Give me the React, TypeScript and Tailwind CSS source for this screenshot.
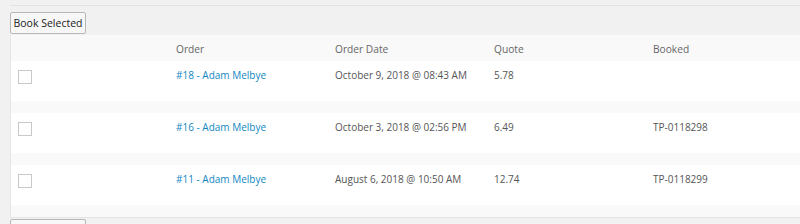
import React from "react";

const ROWS = [
  { id: 18, name: "Adam Melbye", date: "October 9, 2018 @ 08:43 AM", quote: "5.78", booked: "" },
  { id: 16, name: "Adam Melbye", date: "October 3, 2018 @ 02:56 PM", quote: "6.49", booked: "TP-0118298" },
  { id: 11, name: "Adam Melbye", date: "August 6, 2018 @ 10:50 AM", quote: "12.74", booked: "TP-0118299" },
];

const cols = "grid grid-cols-[158px_159px_159px_159px_1fr]";

export default function App() {
  return (
    <div
      className="w-[800px] h-[224px] overflow-hidden bg-[#f1f1f1] text-[10px] text-[#555] whitespace-nowrap"
      style={{ fontFamily: '"Open Sans", "Noto Sans", sans-serif' }}
    >
      <div className="h-[5px]" />
      <div className="ml-[10px] border-t border-[#e2e2e2] h-[7px]" />
      <div className="px-[10px]">
        <button className="w-[76px] h-[22px] border border-[#b7b7b7] rounded-[2px] bg-[#f7f7f7] text-[10.5px] text-[#222] leading-none">
          Book Selected
        </button>
      </div>
      <div className="ml-[10px] mt-[1px] border-l border-b border-[#e5e5e5]">
        {/* Header */}
        <div className={`${cols} h-[26px] pt-[3px] bg-[#f9f9f9] items-center text-[10.2px] text-[#666]`}>
          <div />
          <div className="pl-[7px]">Order</div>
          <div className="pl-[7px]">Order Date</div>
          <div className="pl-[7px]">Quote</div>
          <div className="pl-[7px]">Booked</div>
        </div>
        {ROWS.map((r) => (
          <div key={r.id}>
            <div className={`${cols} h-[40px] bg-white pt-[6px] leading-[17px]`}>
              <div className="pl-[7px] pt-[3px]">
                <div className="w-[14px] h-[14px] border border-[#c8c8c8] bg-white" />
              </div>
              <div className="pl-[7px] text-[#1187c2]">
                #{r.id} - {r.name}
              </div>
              <div className="pl-[7px]">{r.date}</div>
              <div className="pl-[7px]">{r.quote}</div>
              <div className="pl-[7px]">{r.booked}</div>
            </div>
            <div className="h-[12px] bg-[#f9f9f9]" />
          </div>
        ))}
      </div>
      <div className="px-[10px] pt-[1px]">
        <div className="w-[76px] h-[22px] border border-[#b7b7b7] rounded-[2px] bg-[#f7f7f7]" />
      </div>
    </div>
  );
}
